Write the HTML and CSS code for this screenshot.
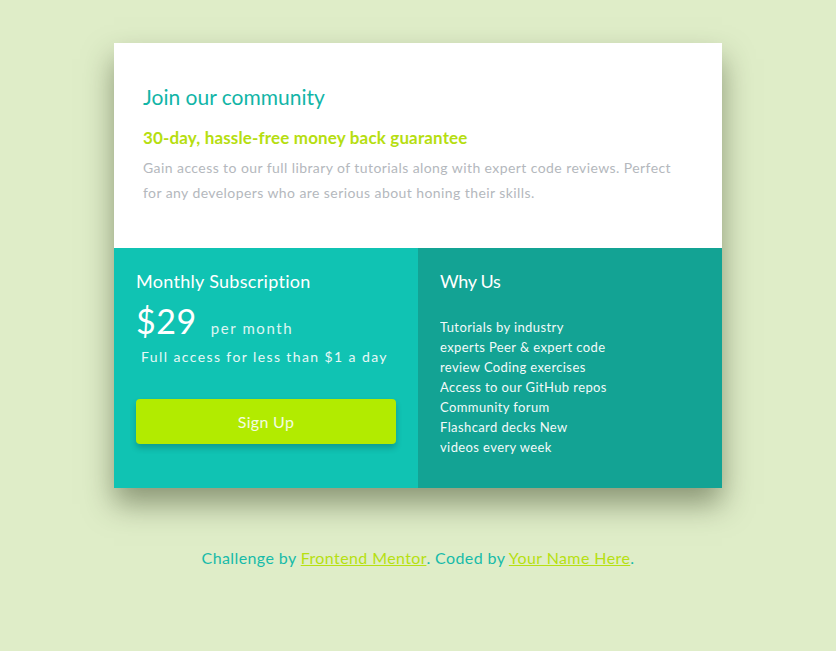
FILE: index.html
```html
<!DOCTYPE html>
<html lang="en">
<head>
<meta charset="utf-8">
<title>Single price grid component</title>
<link rel="stylesheet" href="styles.css">
</head>
<body>
<main class="page">
  <section class="card">
    <div class="intro">
      <h1 class="intro-title">Join our community</h1>
      <h2 class="intro-sub">30-day, hassle-free money back guarantee</h2>
      <p class="intro-text">Gain access to our full library of tutorials along with expert code reviews. Perfect for any developers who are serious about honing their skills.</p>
    </div>
    <div class="bottom">
      <div class="sub">
        <h3 class="col-title">Monthly Subscription</h3>
        <div class="price-row"><span class="price">$29</span><span class="per">per month</span></div>
        <p class="access">Full access for less than $1 a day</p>
        <button class="signup">Sign Up</button>
      </div>
      <div class="why">
        <h3 class="col-title why-title">Why Us</h3>
        <p class="why-list">Tutorials by industry experts Peer &amp; expert code review Coding exercises Access to our GitHub repos Community forum Flashcard decks New videos every week</p>
      </div>
    </div>
  </section>
  <p class="attribution">Challenge by <a href="#">Frontend Mentor</a>. Coded by <a href="#">Your Name Here</a>.</p>
</main>
</body>
</html>
```
FILE: styles.css
```css
* { box-sizing: border-box; }
html, body { margin: 0; padding: 0; }
body {
  background: #dfedc8;
  font-family: "Lato", "Open Sans", sans-serif;
  width: 836px;
  height: 651px;
  overflow: hidden;
}
.page {
  display: flex;
  flex-direction: column;
  align-items: center;
  padding-top: 43px;
}
.card {
  width: 608px;
  box-shadow: 0 16px 28px rgba(55, 65, 35, 0.5);
}
.intro {
  background: #ffffff;
  height: 205px;
  padding: 42px 40px 0 29px;
}
.intro-title {
  margin: 0;
  font-size: 21px;
  font-weight: 400;
  color: #12b5a7;
  line-height: 24px;
}
.intro-sub {
  margin: 18px 0 0 0;
  font-size: 17px;
  font-weight: 700;
  color: #b6de10;
  line-height: 22px;
  letter-spacing: 0.15px;
}
.intro-text {
  margin: 6px 0 0 0;
  font-size: 14px;
  line-height: 25px;
  color: #b4b8bd;
  letter-spacing: 0.42px;
}
.bottom {
  display: flex;
  height: 240px;
}
.sub {
  width: 304px;
  background: #10c3b3;
  padding: 22px 22px 0 22px;
  color: #ffffff;
}
.why {
  width: 304px;
  background: #13a394;
  padding: 22px 22px 0 22px;
  color: #ffffff;
}
.col-title {
  margin: 0;
  font-size: 18px;
  font-weight: 400;
  line-height: 22px;
  letter-spacing: 0.3px;
}
.why-title {
  letter-spacing: -0.3px;
}
.price-row {
  display: flex;
  align-items: baseline;
  margin-top: 9px;
}
.price {
  font-size: 34px;
  line-height: 40px;
  letter-spacing: 0.5px;
}
.per {
  margin-left: 14px;
  font-size: 15px;
  letter-spacing: 1.6px;
  opacity: 0.85;
}
.access {
  margin: 6px 0 0 5px;
  font-size: 14px;
  letter-spacing: 1.4px;
  line-height: 20px;
  opacity: 0.9;
}
.signup {
  display: block;
  margin-top: 32px;
  width: 260px;
  height: 45px;
  border: none;
  border-radius: 4px;
  background: #b2eb00;
  color: #f4fbe0;
  font-family: inherit;
  font-size: 16px;
  letter-spacing: 0.3px;
  box-shadow: 0 4px 6px rgba(0, 0, 0, 0.2);
}
.why-list {
  margin: 25px 0 0 0;
  width: 168px;
  font-size: 13px;
  line-height: 20px;
  letter-spacing: 0.4px;
  opacity: 0.95;
}
.attribution {
  margin: 60px 0 0 0;
  font-size: 16px;
  color: #17bba9;
  line-height: 20px;
  letter-spacing: 0.4px;
}
.attribution a {
  color: #b6e011;
}
```
